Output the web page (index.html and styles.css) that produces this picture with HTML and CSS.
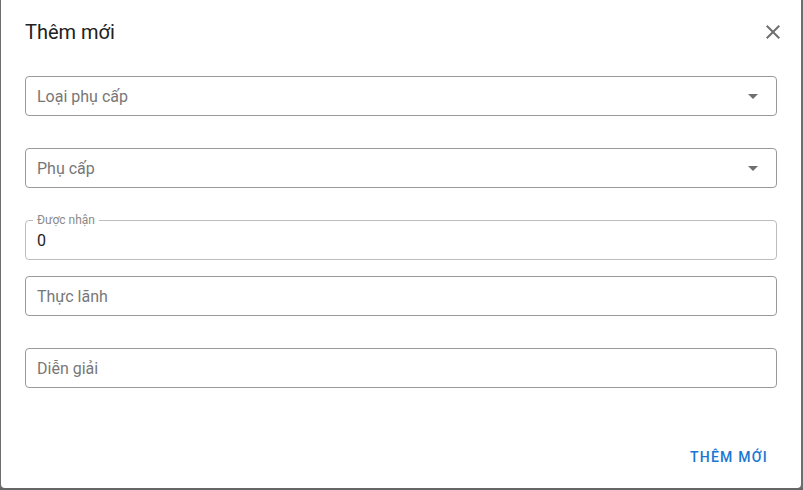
FILE: index.html
```html
<!DOCTYPE html>
<html lang="vi">
<head>
    <meta charset="UTF-8">
    <meta name="viewport" content="width=device-width, initial-scale=1.0">
    <title>Thêm mới</title>
    <link rel="stylesheet" href="styles.css">
</head>
<body>
    <div class="backdrop">
        <div class="dialog">
            <!-- Tiêu đề -->
            <div class="dialog-title">
                <h2>Thêm mới</h2>
                <button class="close-btn" aria-label="Đóng">
                    <svg viewBox="0 0 24 24" width="24" height="24"><path d="M19 6.41 17.59 5 12 10.59 6.41 5 5 6.41 10.59 12 5 17.59 6.41 19 12 13.41 17.59 19 19 17.59 13.41 12z"/></svg>
                </button>
            </div>

            <!-- Nội dung -->
            <div class="dialog-content">
                <div class="field select">
                    <span class="placeholder">Loại phụ cấp</span>
                    <svg class="arrow" viewBox="0 0 24 24" width="24" height="24"><path d="M7 10l5 5 5-5z"/></svg>
                </div>
                <div class="field select">
                    <span class="placeholder">Phụ cấp</span>
                    <svg class="arrow" viewBox="0 0 24 24" width="24" height="24"><path d="M7 10l5 5 5-5z"/></svg>
                </div>
                <div class="field filled">
                    <label class="float-label">Được nhận</label>
                    <span class="value">0</span>
                </div>
                <div class="field">
                    <span class="placeholder">Thực lãnh</span>
                </div>
                <div class="field">
                    <span class="placeholder">Diễn giải</span>
                </div>
            </div>

            <!-- Acciones -->
            <div class="dialog-actions">
                <button class="text-btn">Thêm mới</button>
            </div>
        </div>
        <div class="page-strip"></div>
    </div>
</body>
</html>
```

FILE: styles.css
```css
/* Fondo */
body {
    margin: 0;
    padding: 0;
    font-family: Roboto, "Liberation Sans", Arial, sans-serif;
    background-color: #6d6d6d;
    height: 490px;
    overflow: hidden;
}

.backdrop {
    display: flex;
    flex-direction: column;
    height: 490px;
}

/* Diálogo */
.dialog {
    margin-left: 1px;
    width: 800px;
    height: 488px;
    background-color: #fff;
    border-radius: 0 0 4px 4px;
    display: flex;
    flex-direction: column;
    box-sizing: border-box;
}

.page-strip {
    height: 2px;
    background-color: #666;
}

.dialog-title {
    display: flex;
    align-items: center;
    justify-content: space-between;
    padding: 16px 16px 16px 24px;
}

.dialog-title h2 {
    margin: 0;
    font-size: 20px;
    line-height: 32px;
    font-weight: 400;
    color: #212121;
}

.close-btn {
    background: none;
    border: none;
    padding: 0;
    width: 24px;
    height: 24px;
    cursor: pointer;
    display: flex;
}

.close-btn svg {
    fill: #6f6f6f;
}

/* Campos */
.dialog-content {
    padding: 12px 24px 0 24px;
}

.field {
    position: relative;
    box-sizing: border-box;
    height: 40px;
    border: 1px solid #999;
    border-radius: 4px;
    display: flex;
    align-items: center;
    padding: 0 11px;
    margin-bottom: 32px;
}

.field.filled {
    border-color: #bdbdbd;
    margin-bottom: 16px;
}

.placeholder {
    font-size: 16px;
    color: #777;
    flex: 1;
}

.value {
    font-size: 16px;
    color: #222;
    padding-top: 1px;
}

.arrow {
    fill: #6f6f6f;
    margin-right: 0;
}

.float-label {
    position: absolute;
    left: 7px;
    top: -8px;
    padding: 0 4px;
    background-color: #fff;
    font-size: 12px;
    line-height: 14px;
    color: #8a8a8a;
}

/* Botón */
.dialog-actions {
    margin-top: auto;
    display: flex;
    justify-content: flex-end;
    padding: 8px 25px 13px 8px;
}

.text-btn {
    background: none;
    border: none;
    font-family: inherit;
    font-size: 14px;
    font-weight: 500;
    line-height: 24px;
    letter-spacing: 1.25px;
    text-transform: uppercase;
    color: #1976d2;
    padding: 6px 8px;
    cursor: pointer;
}
```
